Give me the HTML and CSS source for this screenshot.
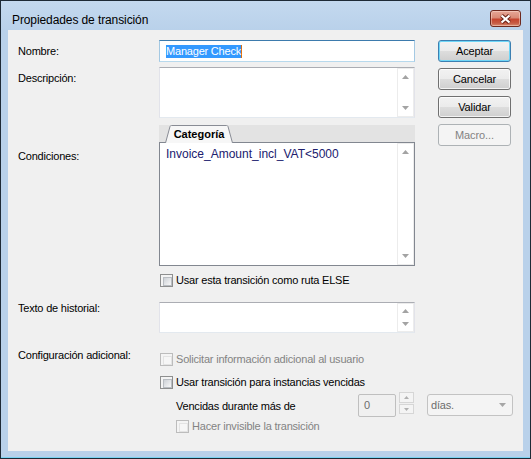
FILE: index.html
```html
<!DOCTYPE html>
<html lang="es">
<head>
<meta charset="utf-8">
<title>Propiedades de transición</title>
<link rel="stylesheet" href="styles.css">
</head>
<body>
<div class="window">
  <div class="titlebar">
    <span class="title">Propiedades de transición</span>
    <div class="close">
      <svg width="13" height="10" viewBox="0 0 13 10"><path d="M2.5 1.5 L10.5 8.5 M10.5 1.5 L2.5 8.5" stroke="#6a2418" stroke-width="4.2" fill="none"/><path d="M2.5 1.5 L10.5 8.5 M10.5 1.5 L2.5 8.5" stroke="#fff" stroke-width="2.2" fill="none"/></svg>
    </div>
  </div>
  <div class="client">
    <div class="form">
      <div class="row row-name">
        <div class="label">Nombre:</div>
        <div class="input focused"><span class="sel">Manager Check</span></div>
      </div>

      <div class="row row-desc">
        <div class="label label-desc">Descripción:</div>
        <div class="textbox desc">
          <div class="tb-text"></div>
          <div class="vscroll">
            <div class="sb"><svg width="7" height="4" viewBox="0 0 7 4"><path d="M0 4 L3.5 0 L7 4Z" fill="#a3a3a3"/></svg></div>
            <div class="sb"><svg width="7" height="4" viewBox="0 0 7 4"><path d="M0 0 L7 0 L3.5 4Z" fill="#a3a3a3"/></svg></div>
          </div>
        </div>
      </div>

      <div class="row row-cond">
        <div class="label label-cond">Condiciones:</div>
        <div class="field">
          <div class="tabstrip">
            <div class="tab">
              <svg class="tab-shape" width="68" height="18" viewBox="0 0 68 18" preserveAspectRatio="none"><path d="M0.5 18 L5 1.5 Q5.4 0.5 6.5 0.5 L61.5 0.5 Q62.6 0.5 63 1.5 L67.5 18" fill="#f7f7f7" stroke="#898c95"/></svg>
              <span class="tab-text">Categoría</span>
            </div>
          </div>
          <div class="listbox">
            <div class="lb-text">Invoice_Amount_incl_VAT&lt;5000</div>
            <div class="vscroll">
              <div class="sb"><svg width="7" height="4" viewBox="0 0 7 4"><path d="M0 4 L3.5 0 L7 4Z" fill="#a3a3a3"/></svg></div>
              <div class="sb"><svg width="7" height="4" viewBox="0 0 7 4"><path d="M0 0 L7 0 L3.5 4Z" fill="#a3a3a3"/></svg></div>
            </div>
          </div>
        </div>
      </div>

      <div class="row row-else">
        <div class="label"></div>
        <div class="check first">
          <span class="cb"></span><span class="cb-text">Usar esta transición como ruta ELSE</span>
        </div>
      </div>

      <div class="row row-hist">
        <div class="label">Texto de historial:</div>
        <div class="textbox hist">
          <div class="tb-text"></div>
          <div class="vscroll">
            <div class="sb"><svg width="7" height="4" viewBox="0 0 7 4"><path d="M0 4 L3.5 0 L7 4Z" fill="#a3a3a3"/></svg></div>
            <div class="sb"><svg width="7" height="4" viewBox="0 0 7 4"><path d="M0 0 L7 0 L3.5 4Z" fill="#a3a3a3"/></svg></div>
          </div>
        </div>
      </div>

      <div class="row row-config">
        <div class="label label-config">Configuración adicional:</div>
        <div class="field config">
          <div class="check first disabled">
            <span class="cb"></span><span class="cb-text">Solicitar información adicional al usuario</span>
          </div>
          <div class="check first usar">
            <span class="cb"></span><span class="cb-text">Usar transición para instancias vencidas</span>
          </div>
          <div class="vencidas">
            <span class="venc-text">Vencidas durante más de</span>
            <div class="spin-input">0</div>
            <div class="spin">
              <div class="spin-btn up"><svg width="5" height="3" viewBox="0 0 5 3"><path d="M0 3 L2.5 0 L5 3Z" fill="#b0b0b0"/></svg></div>
              <div class="spin-btn down"><svg width="5" height="3" viewBox="0 0 5 3"><path d="M0 0 L5 0 L2.5 3Z" fill="#b0b0b0"/></svg></div>
            </div>
            <div class="combo">
              <span class="combo-text">días.</span>
              <svg width="7" height="4" viewBox="0 0 7 4"><path d="M0 0 L7 0 L3.5 4Z" fill="#a6a6a6"/></svg>
            </div>
          </div>
          <div class="check disabled hacer">
            <span class="cb"></span><span class="cb-text">Hacer invisible la transición</span>
          </div>
        </div>
      </div>
    </div>

    <div class="buttons">
      <button class="btn default">Aceptar</button>
      <button class="btn">Cancelar</button>
      <button class="btn">Validar</button>
      <button class="btn disabled">Macro...</button>
    </div>
  </div>
</div>
</body>
</html>
```
FILE: styles.css
```css
* { box-sizing: border-box; }
html, body { margin: 0; padding: 0; }
body {
  width: 531px;
  height: 459px;
  overflow: hidden;
  font-family: "Liberation Sans", Arial, sans-serif;
  font-size: 11px;
  line-height: 13px;
  letter-spacing: -0.2px;
  color: #000;
}
.window {
  width: 531px;
  height: 459px;
  border: 1px solid #1e2a36;
  background: #b9d1ea;
  box-shadow: inset 0 -1px 0 #7ad3f2;
  display: flex;
  flex-direction: column;
}
.titlebar {
  height: 29px;
  flex: none;
  display: flex;
  justify-content: space-between;
  align-items: flex-start;
  padding: 0 9px 0 11px;
  background: linear-gradient(#c4d9ef, #b9d1ea);
}
.title {
  font-size: 12px;
  line-height: 15px;
  margin-top: 12px;
  letter-spacing: -0.1px;
  color: #000;
}
.close {
  width: 31px;
  height: 17px;
  margin-top: 9px;
  border: 1px solid #6e2a1f;
  border-radius: 3px;
  background: linear-gradient(#e6a797 0%, #d98a76 45%, #c5452f 55%, #c65a43 80%, #d78a70 100%);
  box-shadow: inset 0 0 0 1px rgba(255, 230, 220, 0.45);
  display: flex;
  align-items: center;
  justify-content: center;
}
.client {
  flex: 1;
  margin: 0 7px 7px;
  background: #f0f0f0;
  display: flex;
  gap: 23px;
  padding: 10px 0 0 10px;
}
.form {
  width: 397px;
  flex: none;
  display: flex;
  flex-direction: column;
}
.row { display: flex; }
.label { width: 141px; flex: none; }
.field { width: 256px; flex: none; }

.row-name { height: 22px; align-items: center; }
.input {
  width: 256px;
  height: 22px;
  background: #fff;
  border: 1px solid;
  border-color: #3d7bad #a4c9e3 #b7d9ed #a4c9e3;
  padding-left: 6px;
  display: flex;
  align-items: center;
}
.sel {
  background: #3399ff;
  color: #fff;
  line-height: 13px;
  border-right: 1px solid #e07010;
}

.textbox {
  width: 256px;
  background: #fff;
  border: 1px solid;
  border-color: #abadb3 #e2e3ea #e3e9ef #e2e3ea;
  display: flex;
}
.tb-text { flex: 1; }
.vscroll {
  width: 17px;
  flex: none;
  border: 1px solid #ececec;
  display: flex;
  flex-direction: column;
  justify-content: space-between;
}
.sb {
  height: 16px;
  flex: 0 1 16px;
  display: flex;
  align-items: center;
  justify-content: center;
}
.row-desc { margin-top: 5px; }
.label-desc { padding-top: 5px; }
.desc { height: 51px; }

.row-cond { margin-top: 7px; }
.label-cond { padding-top: 25px; }
.tabstrip {
  height: 17px;
  background: #e3e3e3;
  display: flex;
  align-items: flex-end;
  padding-left: 6px;
}
.tab {
  position: relative;
  width: 68px;
  height: 17px;
  display: flex;
  justify-content: center;
  align-items: center;
}
.tab-shape { position: absolute; left: 0; top: 0; }
.tab-text { position: relative; font-weight: bold; line-height: 13px; padding-top: 2px; letter-spacing: 0; }
.listbox {
  height: 124px;
  background: #fff;
  border: 1px solid #828790;
  display: flex;
}
.lb-text {
  flex: 1;
  padding: 5px 0 0 6px;
  font-size: 12px;
  line-height: 13px;
  letter-spacing: 0;
  color: #20206e;
}

.row-else { margin-top: 8px; }
.check {
  display: flex;
  align-items: center;
  gap: 3px;
  height: 13px;
}
.check.first { margin-left: 1px; }
.cb {
  width: 13px;
  height: 13px;
  flex: none;
  border: 1px solid #8e8f8f;
  background: #f4f4f4;
  padding: 2px;
  display: block;
}
.cb::after {
  content: "";
  display: block;
  width: 100%;
  height: 100%;
  border: 1px solid #b9bdc2;
  background: linear-gradient(135deg, #cdd1d6, #f8f8f8);
}
.check.disabled .cb { border-color: #bcbcbc; }
.check.disabled .cb::after { border-color: #e3e3e3; background: #f6f6f6; }
.check.disabled .cb-text { color: #838383; }

.row-hist { margin-top: 15px; }
.hist { height: 31px; }

.row-config { margin-top: 20px; }
.label-config { margin-top: -4px; }
.config { display: flex; flex-direction: column; }
.usar { margin-top: 10px; }
.vencidas {
  display: flex;
  align-items: flex-start;
  margin-top: 3px;
  margin-left: 17px;
  height: 25px;
}
.venc-text { width: 182px; flex: none; margin-top: 8px; }
.spin-input {
  width: 38px;
  height: 23px;
  flex: none;
  margin-top: 2px;
  border: 1px solid #bfbfbf;
  border-radius: 2px;
  background: #f0f0f0;
  color: #6d6d6d;
  padding: 4px 0 0 5px;
}
.spin {
  width: 15px;
  flex: none;
  margin-left: 3px;
  display: flex;
  flex-direction: column;
  gap: 1px;
}
.spin-btn {
  border: 1px solid #d6d6d6;
  background: #f4f4f4;
  display: flex;
  align-items: center;
  justify-content: center;
}
.spin-btn.up { height: 11px; }
.spin-btn.down { height: 10px; }
.combo {
  width: 86px;
  height: 22px;
  flex: none;
  margin-left: 13px;
  margin-top: 2px;
  border: 1px solid #c3c3c3;
  border-radius: 3px;
  background: #f4f4f4;
  display: flex;
  align-items: center;
  justify-content: space-between;
  padding: 0 6px 0 3px;
  color: #6d6d6d;
}
.hacer { margin-top: 3px; margin-left: 17px; }

.buttons {
  width: 73px;
  flex: none;
  display: flex;
  flex-direction: column;
  gap: 6px;
}
.btn {
  width: 73px;
  height: 22px;
  margin: 0;
  padding: 0;
  font-family: "Liberation Sans", Arial, sans-serif;
  font-size: 11px;
  line-height: 13px;
  letter-spacing: -0.1px;
  color: #000;
  border: 1px solid #707070;
  border-radius: 3px;
  background: linear-gradient(#f2f2f2 0%, #ebebeb 50%, #dddddd 51%, #cfcfcf 100%);
  box-shadow: inset 0 0 0 1px rgba(255, 255, 255, 0.75);
  display: flex;
  align-items: center;
  justify-content: center;
}
.btn.default {
  border-color: #3c7fb1;
  box-shadow: inset 0 0 0 1px #6fd6f7;
}
.btn.disabled {
  border-color: #adb2b5;
  background: #f4f4f4;
  box-shadow: none;
  color: #838383;
}
```
